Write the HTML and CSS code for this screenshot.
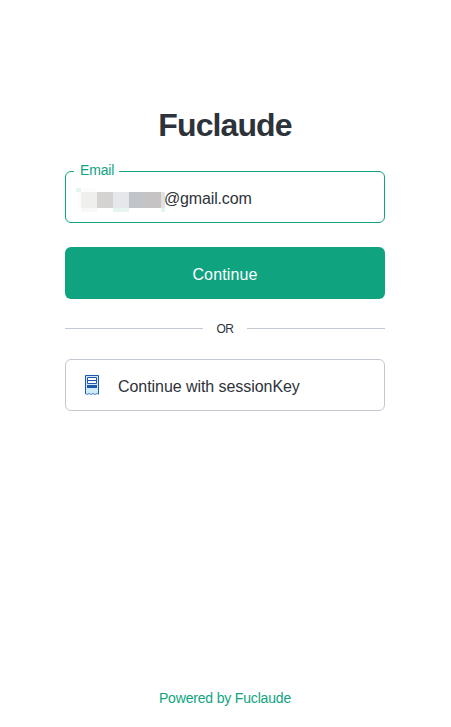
FILE: index.html
```html
<!DOCTYPE html>
<html lang="en">
<head>
<meta charset="utf-8">
<title>Fuclaude</title>
<link rel="stylesheet" href="styles.css">
</head>
<body>
<main class="login">
  <h1 class="title">Fuclaude</h1>
  <div class="field">
    <span class="label">Email</span>
    <svg class="mask" width="89" height="24" shape-rendering="crispEdges" aria-hidden="true">
      <rect width="5" height="4" fill="#e5f5f2"/>
      <rect x="5" width="16" height="4" fill="#fcfcfc"/>
      <rect y="4" width="5" height="16" fill="#fcfcfc"/>
      <rect x="5" y="4" width="16" height="16" fill="#efefed"/>
      <rect x="21" y="4" width="16" height="16" fill="#d5d3d2"/>
      <rect x="37" y="4" width="16" height="16" fill="#e5e7ea"/>
      <rect x="53" y="4" width="16" height="16" fill="#c1c5c9"/>
      <rect x="69" y="4" width="16" height="16" fill="#c6c3c5"/>
      <rect x="85" y="4" width="4" height="16" fill="#e2e2e2"/>
      <rect x="5" y="20" width="16" height="4" fill="#f8f8f8"/>
      <rect x="37" y="20" width="16" height="4" fill="#e5f5f2"/>
      <rect x="85" y="20" width="4" height="4" fill="#e5f5f2"/>
    </svg>
    <span class="value">@gmail.com</span>
  </div>
  <button class="submit"><span>Continue</span></button>
  <div class="divider"><span>OR</span></div>
  <button class="alt">
    <svg width="14" height="20" viewBox="0 0 14 20" aria-hidden="true">
      <path d="M0 0h14v19.5l-1.75-1-1.75 1-1.75-1-1.75 1-1.75-1-1.75 1-1.75-1-1.75 1z" fill="#d0ebf8"/>
      <path d="M.5 19V.5h13V19" fill="none" stroke="#2057ad"/>
      <path d="M.5 18.7l1.5.8 2-1 2 1 2-1 2 1 2-1 1.5.8" fill="none" stroke="#4c83c0"/>
      <path d="M2.5 2.5h9v6h-9zM2.5 5.5h9" fill="#fff" stroke="#2057ad"/>
      <path d="M2 10h10v3H2z" fill="#2057ad"/>
    </svg>
    <span>Continue with sessionKey</span>
  </button>
</main>
<footer class="footer"><a>Powered by Fuclaude</a></footer>
</body>
</html>
```
FILE: styles.css
```css
* { box-sizing: border-box; }
body {
  margin: 0;
  height: 727px;
  display: flex;
  flex-direction: column;
  align-items: center;
  justify-content: space-between;
  padding: 106px 1px 19px 0;
  background: #fff;
  color: #2d333a;
  font-family: "Liberation Sans", Arial, sans-serif;
  font-size: 16px;
}
.login { width: 320px; display: flex; flex-direction: column; }
.title {
  margin: 0 0 27px;
  text-align: center;
  font-size: 32px;
  line-height: 38px;
  font-weight: 700;
  letter-spacing: -0.9px;
}
.field {
  position: relative;
  height: 52px;
  display: flex;
  align-items: center;
  padding: 0 10px;
  border: 1px solid #10a37f;
  border-radius: 6px;
}
.label {
  position: absolute;
  left: 8px;
  top: -11px;
  padding: 0 5px 0 6px;
  background: #fff;
  color: #10a37f;
  font-size: 14px;
  line-height: 18px;
  letter-spacing: -0.15px;
}
.mask { flex: none; margin-top: 6px; }
.value { margin-left: -1px; padding-top: 3px; letter-spacing: -0.15px; }
button { height: 52px; border-radius: 6px; font: inherit; padding: 0; }
.submit {
  margin-top: 24px;
  border: 0;
  background: #10a37f;
  color: #fff;
  letter-spacing: 0.15px;
  padding-top: 4px;
}
.divider {
  display: grid;
  grid-template-columns: 1fr 44px 1fr;
  align-items: center;
  height: 59px;
  margin-bottom: 1px;
  text-align: center;
  font-size: 12px;
  letter-spacing: -0.4px;
}
.divider::before, .divider::after { content: ""; height: 1px; background: #c2c8d0; }
.divider span { padding-top: 1px; }
.alt {
  display: flex;
  align-items: center;
  gap: 19px;
  padding-left: 19px;
  border: 1px solid #c2c8d0;
  background: #fff;
  color: #2d333a;
  letter-spacing: -0.06px;
}
.alt span { padding-top: 3px; }
.footer { color: #10a37f; font-size: 14px; line-height: 20px; letter-spacing: -0.17px; }
```
